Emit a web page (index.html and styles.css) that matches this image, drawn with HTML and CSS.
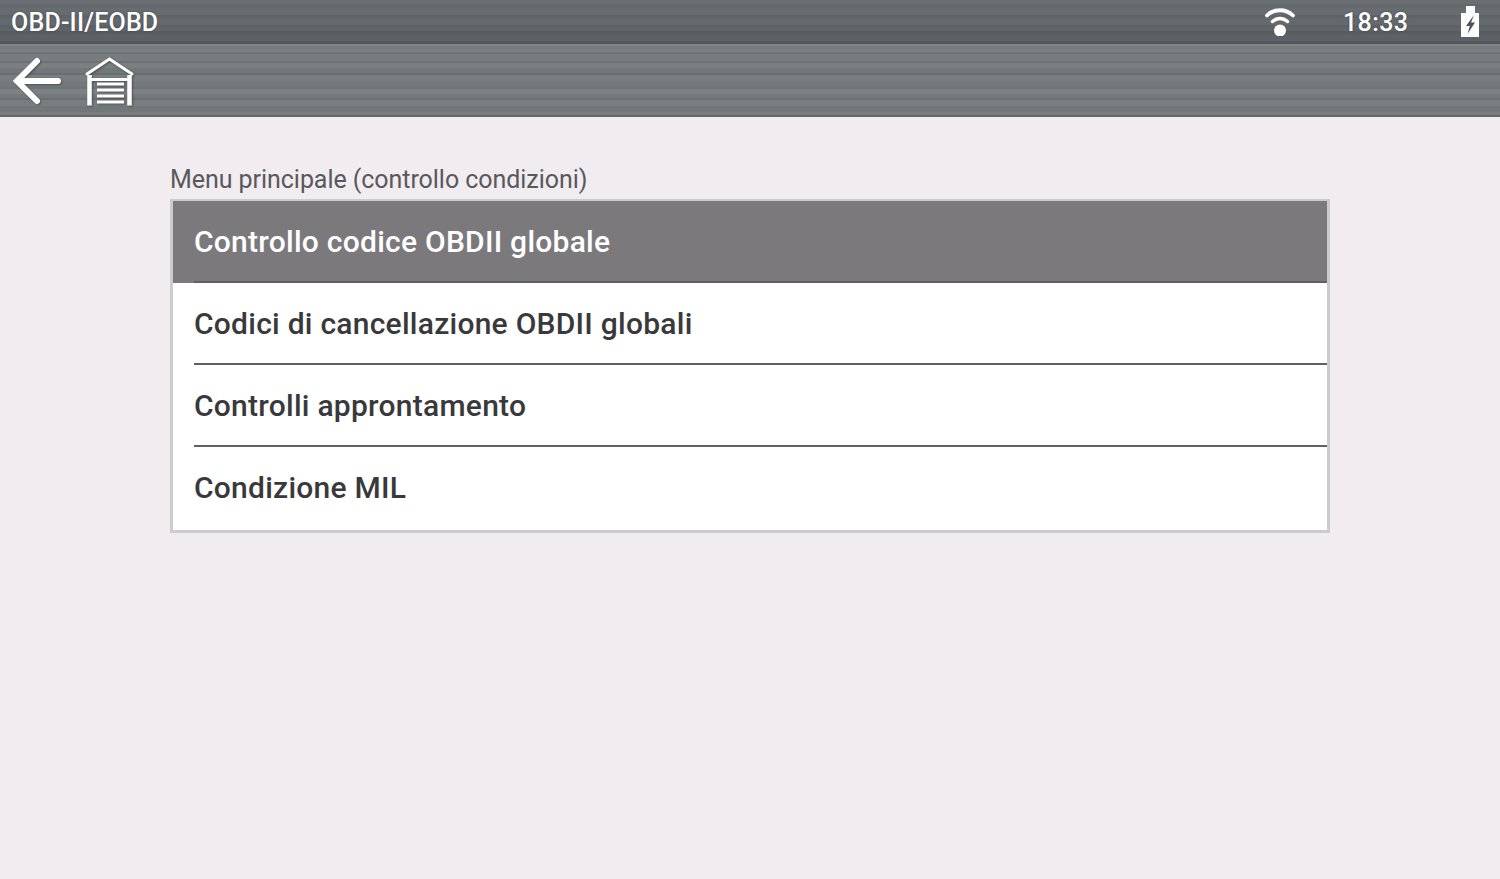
FILE: index.html
```html
<!DOCTYPE html>
<html lang="it">
  <head>
    <meta charset="UTF-8" />
    <title>OBD-II/EOBD</title>
    <link rel="stylesheet" href="styles.css">
  </head>
  <body>
    <header class="app-header">
      <!-- [1] Status bar -->
      <div class="status-bar">
        <span class="status-title">OBD-II/EOBD</span>
        <div class="status-icons">
          <svg class="icon-wifi" aria-hidden="true" width="32" height="28" viewBox="0 0 32 28">
            <g fill="none" stroke="#fff" stroke-linecap="round">
              <path stroke-width="3.8" d="M3 7.5C10 0.5 22 0.5 29 7.5" />
              <path stroke-width="3.4" d="M8.5 13.5C13 9.5 19 9.5 23.5 13.5" />
            </g>
            <circle fill="#fff" cx="16" cy="22.5" r="6" />
          </svg>
          <span class="status-time">18:33</span>
          <svg class="icon-battery" aria-hidden="true" width="20" height="32" viewBox="0 0 20 32">
            <path fill="#fff" d="M6 0H15V7H19V31H1V7H6Z" />
            <path fill="#4f5356" d="M14 9L6 20H9.8L7.5 28L15 16.5H11Z" />
          </svg>
        </div>
      </div>

      <!-- [2] Toolbar -->
      <div class="toolbar">
        <svg class="tool-icon" aria-hidden="true" width="50" height="50" viewBox="0 0 50 50">
          <path fill="none" stroke="#fff" stroke-width="6" stroke-linecap="round" d="M25 5L5 25L25 45M5 25H46" />
        </svg>
        <svg class="tool-icon" aria-hidden="true" width="50" height="50" viewBox="0 0 50 50">
          <g fill="none" stroke="#fff">
            <path stroke-width="3" stroke-linecap="round" d="M2 18L24.5 3L47 18" />
            <path stroke-width="4.5" d="M4.5 19V49.5M44.5 19V49.5" />
            <path stroke-width="3" d="M5 23.5H44" />
            <path stroke-width="3" d="M12 28H39M12 34H39M12 40H39M12 46H39" />
          </g>
        </svg>
      </div>
    </header>

    <main class="content">
      <h1 class="menu-title">Menu principale (controllo condizioni)</h1>
      <ul class="menu">
        <li class="menu-item selected"><span>Controllo codice OBDII globale</span></li>
        <li class="menu-item"><span>Codici di cancellazione OBDII globali</span></li>
        <li class="menu-item"><span>Controlli approntamento</span></li>
        <li class="menu-item"><span>Condizione MIL</span></li>
      </ul>
    </main>
  </body>
</html>
```

FILE: styles.css
```css
* {
  margin: 0;
  padding: 0;
  box-sizing: border-box;
}
:root {
  --page: #f0ecf0;
  --selected: #7b797c;
  --ink: #39393b;
  --line: #606062;
  --edge: #cccccc;
}
body {
  min-height: 879px;
  overflow: hidden;
  background-color: var(--page);
  font-family: Roboto, sans-serif;
}

/*
  Header
*/

.app-header {
  height: 117px;
  color: #fff;
}
.status-bar {
  height: 44px;
  display: flex;
  align-items: center;
  justify-content: space-between;
  padding: 0 20px 0 11px;
  text-shadow: 0 0 2px rgba(40, 40, 40, 0.5);
  background: linear-gradient(
    180deg,
    #6b6f73 0 4px,
    #63686c 4px 8px,
    #676c70 8px 15px,
    #5f6468 15px 18px,
    #64696d 18px 25px,
    #5d6266 25px 28px,
    #606569 28px 31px,
    #575c60 31px 34px,
    #5c6165 34px 41px,
    #53585c 41px 44px
  );
}
.status-title {
  font-size: 25px;
  font-weight: 500;
  letter-spacing: 0.2px;
}
.status-icons {
  display: flex;
  align-items: center;
}
.status-time {
  width: 66px;
  margin: 0 51px 0 47px;
  font-size: 25px;
  font-weight: 500;
  letter-spacing: 0.4px;
}
.toolbar {
  height: 73px;
  display: flex;
  gap: 23px;
  align-items: center;
  padding: 0 0 0 12px;
  background: linear-gradient(
    180deg,
    #7f8487 0 2px,
    #767b7e 2px 5px,
    #7b8083 5px 8px,
    #70757a 8px 10px,
    #777c7f 10px 17px,
    #6c7175 17px 19px,
    #7a7f82 19px 24px,
    #72777a 24px 29px,
    #696e72 29px 31px,
    #797e81 31px 37px,
    #74797c 37px 43px,
    #6e7377 43px 45px,
    #7c8184 45px 50px,
    #75797d 50px 54px,
    #6b7074 54px 56px,
    #787d80 56px 62px,
    #72777a 62px 68px,
    #777c7f 68px 71px,
    #63686b 71px 73px
  );
}
.tool-icon {
  filter: drop-shadow(1px 1px 1px rgba(30, 30, 30, 0.45));
}

/*
  Menu
*/

.content {
  width: 1160px;
  margin: 0 auto;
  padding-top: 47px;
}
.menu-title {
  height: 35px;
  font-size: 25px;
  line-height: 31px;
  font-weight: 400;
  letter-spacing: -0.05px;
  color: #59585b;
}
.menu {
  list-style: none;
  background-color: #fff;
  border: 3px solid var(--edge);
  border-top-width: 2px;
}
.menu-item {
  height: 82px;
  display: flex;
  align-items: center;
  padding: 0 0 2px 21px;
  font-size: 30px;
  font-weight: 500;
  letter-spacing: 0.25px;
  color: var(--ink);
  position: relative;
}
.menu-item::after {
  content: "";
  position: absolute;
  left: 21px;
  right: 0;
  bottom: 0;
  height: 2px;
  background-color: var(--line);
}
.menu-item:last-child {
  height: 83px;
  padding-bottom: 3px;
}
.menu-item:last-child::after {
  display: none;
}
.menu-item.selected {
  color: #fff;
  background-color: var(--selected);
}
```
